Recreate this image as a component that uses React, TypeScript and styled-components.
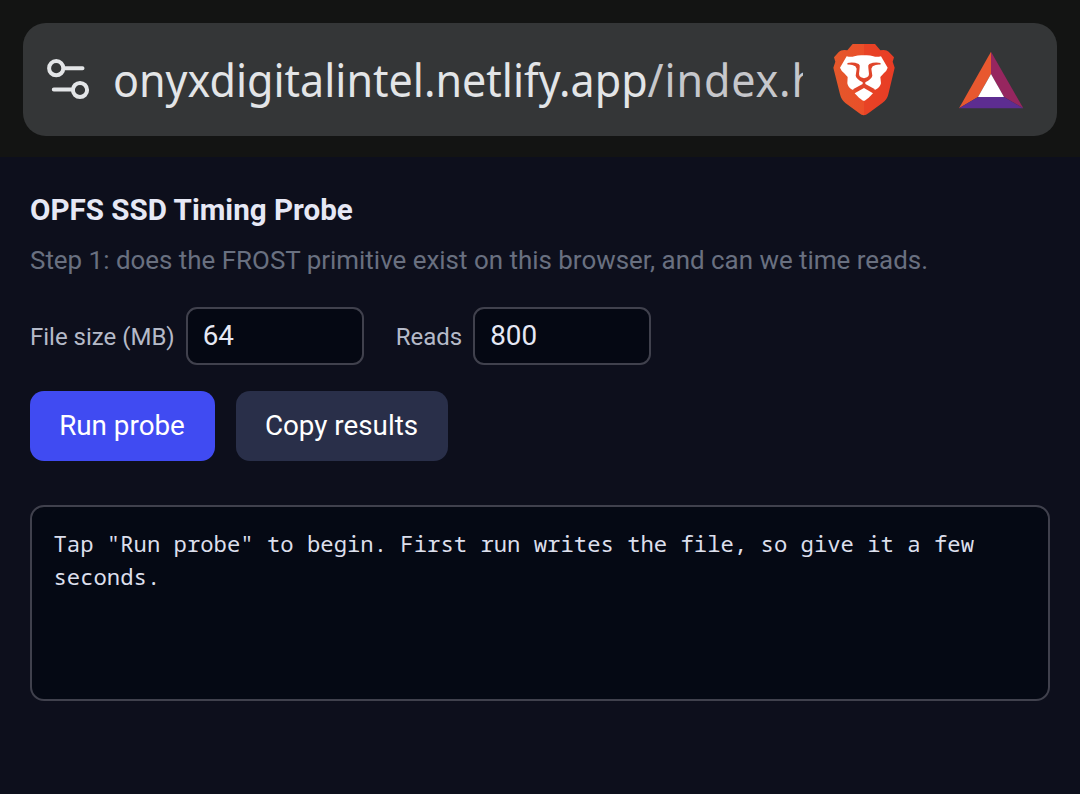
import React, { useState } from "react";
import styled, { createGlobalStyle } from "styled-components";

const GlobalStyle = createGlobalStyle`
  * {
    box-sizing: border-box;
  }
  body {
    margin: 0;
    background: #0d0f1c;
    font-family: Roboto, "Liberation Sans", sans-serif;
  }
`;

const Screen = styled.div`
  display: flex;
  flex-direction: column;
  width: 1080px;
  height: 794px;
  overflow: hidden;
`;

const Toolbar = styled.header`
  height: 157px;
  padding: 23px 23px 0;
  background: #131413;
`;

const AddressBar = styled.div`
  display: flex;
  align-items: center;
  height: 113px;
  padding: 0 32px 0 24px;
  border-radius: 23px;
  background: #343637;
`;

const Url = styled.div`
  width: 690px;
  margin-left: 23px;
  overflow: hidden;
  color: #e3e5e7;
  font-family: "Noto Sans", "Open Sans", sans-serif;
  font-size: 45px;
  line-height: 64px;
  white-space: nowrap;
`;

const UrlText = styled.span`
  display: inline-block;
  transform: scaleX(0.956);
  transform-origin: 0 50%;
`;

const UrlPath = styled.span`
  color: #c6c7cb;
  letter-spacing: 0.9px;
`;

const ShieldButton = styled.div`
  display: flex;
  margin-left: 30px;
  padding-top: 1px;
`;

const RewardsButton = styled.div`
  display: flex;
  margin-left: 64px;
  padding-top: 2px;
`;

const Page = styled.main`
  flex: 1;
  padding: 33px 30px 0;
  background: #0d0f1c;
`;

const Title = styled.h1`
  margin: 0;
  color: #e6e8f5;
  font-size: 29.6px;
  font-weight: 700;
  line-height: 40px;
`;

const Subtitle = styled.p`
  margin: 12px 0 0;
  color: #697080;
  font-size: 25.93px;
  line-height: 36px;
`;

const Fields = styled.div`
  display: flex;
  align-items: center;
  gap: 32px;
  margin-top: 29px;
`;

const Field = styled.label`
  display: flex;
  align-items: center;
  gap: 11px;
  color: #b5bac8;
  font-size: 24px;
  line-height: 32px;
`;

const FieldName = styled.span`
  padding-top: 2px;
`;

const FieldInput = styled.input`
  width: 178px;
  height: 58px;
  padding: 0 15px 2px;
  border: 2px solid #40414d;
  border-radius: 11px;
  outline: none;
  background: #050813;
  color: #e6e8f5;
  font-family: inherit;
  font-size: 27.8px;
`;

const Actions = styled.div`
  display: flex;
  gap: 21px;
  margin-top: 26px;
`;

const Button = styled.button<{ $primary?: boolean }>`
  height: 70px;
  width: ${({ $primary }) => ($primary ? 185 : 212)}px;
  padding: 0 1px 1px 0;
  border: 0;
  border-radius: 14px;
  background: ${({ $primary }) => ($primary ? "#404bf2" : "#292f49")};
  color: #fff;
  font-family: inherit;
  font-size: 27.8px;
`;

const Output = styled.pre`
  height: 196px;
  margin: 44px 0 0;
  padding: 20px 21.5px;
  border: 2px solid #40414d;
  border-radius: 14px;
  background: #050914;
  color: #dcdfec;
  font-family: "Noto Sans Mono", "Droid Sans Mono", "DejaVu Sans Mono", monospace;
  font-size: 22.24px;
  line-height: 33px;
  white-space: pre-wrap;
`;

const SiteSettingsIcon: React.FC = () => (
  <svg width="43" height="41" viewBox="0 0 43 41" fill="none" stroke="#e3e5e7" strokeWidth="4">
    <circle cx="9.2" cy="9.2" r="7.1" />
    <circle cx="33" cy="31" r="7.1" />
    <path d="M17 9.2h18.5M26 30.5H6.8" strokeLinecap="round" />
  </svg>
);

const BraveIcon: React.FC = () => (
  <svg width="62" height="74" viewBox="340 130 186 222">
    <defs>
      <linearGradient id="mane" x1="0" x2="1">
        <stop offset="0" stopColor="#e4582b" />
        <stop offset="0.5" stopColor="#ea4f29" />
        <stop offset="0.5" stopColor="#e84325" />
        <stop offset="1" stopColor="#e83c25" />
      </linearGradient>
    </defs>
    <path
      fill="url(#mane)"
      d="M399 133H466L482 152Q500 149 507 156L523 173L519 186L525 204L506 284Q502 301 488 310L446 341Q432 353 419 341L377 310Q365 301 361 284L341 204L347 186L343 173L358 156Q366 149 383 152Z"
    />
    <path
      fill="#fff"
      d="M381 170Q394 173 404 170Q418 165 433 167Q448 165 461 170Q471 173 484 170L504 204Q501 214 493 220L482 232L484 251Q481 264 467 270L454 268L434 254L411 268L398 270Q385 264 383 251L384 232L373 220Q365 214 361 204Z"
    />
    <path
      fill="#e0452a"
      d="M383 190Q401 186 417 193Q422 196 420 204L418 223Q418 230 424 233L433 236L442 233Q448 230 448 223L446 204Q444 196 449 193Q465 186 483 190L482 195Q469 194 459 200L455 207L458 228Q456 238 437 248V253L466 269Q453 276 448 273L433 263L418 273Q411 276 400 269L429 253V248Q410 238 408 228L411 207L407 200Q397 194 384 195Z"
    />
    <path fill="#fff" d="M433 265L460 281L447 294L435 303Q433 304 430 303L418 294L405 281Z" />
  </svg>
);

const RewardsIcon: React.FC = () => (
  <svg width="65" height="59" viewBox="718 153 195 177">
    <path fill="#e8582f" d="M814 155V222L775 291L718 325Z" />
    <path fill="#96265f" d="M814 155L911 325L853 291L814 222Z" />
    <path fill="#5d2d91" d="M718 325L775 291H853L911 325Z" />
    <path fill="#fff" d="M814 222L853 291H775Z" />
  </svg>
);

const App: React.FC = () => {
  const [fileSize, setFileSize] = useState("64");
  const [reads, setReads] = useState("800");

  return (
    <>
      <GlobalStyle />
      <Screen>
        <Toolbar>
          <AddressBar>
            <SiteSettingsIcon />
            <Url>
              <UrlText>
                onyxdigitalintel.netlify.app<UrlPath>/index.html</UrlPath>
              </UrlText>
            </Url>
            <ShieldButton>
              <BraveIcon />
            </ShieldButton>
            <RewardsButton>
              <RewardsIcon />
            </RewardsButton>
          </AddressBar>
        </Toolbar>
        <Page>
          <Title>OPFS SSD Timing Probe</Title>
          <Subtitle>Step 1: does the FROST primitive exist on this browser, and can we time reads.</Subtitle>
          <Fields>
            <Field>
              <FieldName>File size (MB)</FieldName>
              <FieldInput value={fileSize} onChange={(e) => setFileSize(e.target.value)} />
            </Field>
            <Field>
              <FieldName>Reads</FieldName>
              <FieldInput value={reads} onChange={(e) => setReads(e.target.value)} />
            </Field>
          </Fields>
          <Actions>
            <Button $primary>Run probe</Button>
            <Button>Copy results</Button>
          </Actions>
          <Output>Tap "Run probe" to begin. First run writes the file, so give it a few seconds.</Output>
        </Page>
      </Screen>
    </>
  );
};

export default App;
